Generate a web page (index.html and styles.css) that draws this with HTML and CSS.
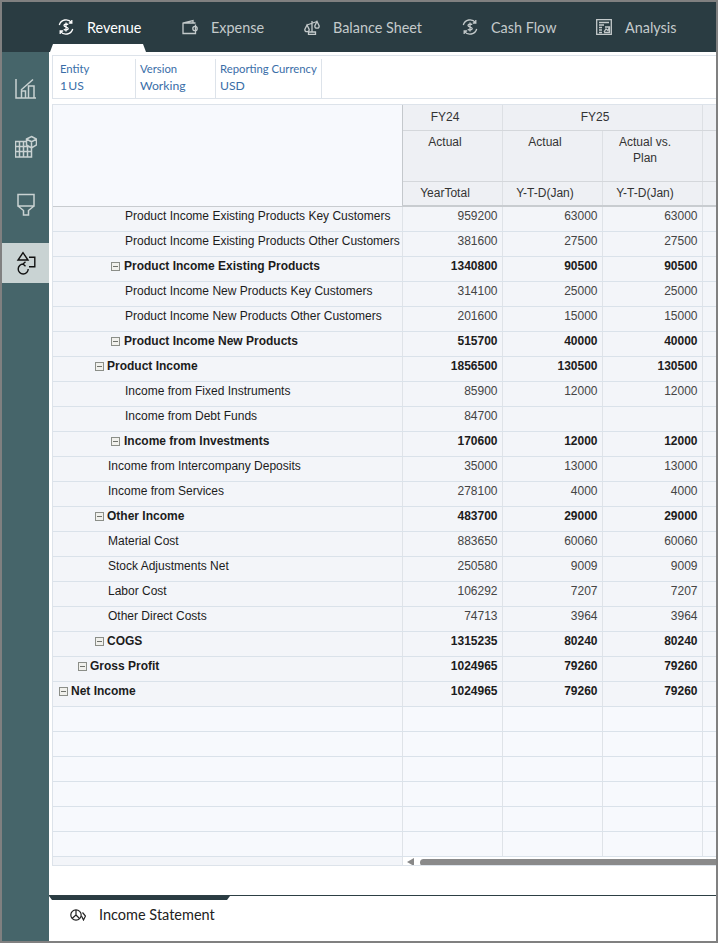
FILE: index.html
```html
<!DOCTYPE html>
<html lang="en">
<head>
<meta charset="utf-8">
<title>Income Statement</title>
<link rel="stylesheet" href="styles.css">
</head>
<body>
<div class="app">
  <header class="topbar">
    <div class="tab tab-active">
      <svg class="tab-icon" viewBox="0 0 16 16"><path d="M13.600 3.600A7 7 0 0 0 1.300 6M2.400 12.400A7 7 0 0 0 14.700 10M13.800 1v3h-3M2.200 15v-3h3"/><path d="M10.200 5.600C9.400 4.800 6 4.600 6 6.400c0 2 4.200 1.200 4.200 3.200 0 1.800-3.400 1.600-4.400 .7M8 3.500v9"/></svg>
      <span>Revenue</span>
    </div>
    <div class="tab tab-expense">
      <svg class="tab-icon" viewBox="0 0 16 16"><path d="M13.500 5.500V14.500H1V4L11 1.500V4M1 4H13.500"/><circle cx="13" cy="9.500" r="2.200"/></svg>
      <span>Expense</span>
    </div>
    <div class="tab tab-balance">
      <svg class="tab-icon" viewBox="0 0 16 16"><path d="M8 2V13M3 6L13 2.500M4.500 15.500H11.500V13H4.500Z"/><path d="M3 6L.8 10.500A2.200 2.200 0 0 0 5.200 10.500ZM13 2.500L10.800 7A2.200 2.200 0 0 0 15.200 7Z"/></svg>
      <span>Balance Sheet</span>
    </div>
    <div class="tab tab-cash">
      <svg class="tab-icon" viewBox="0 0 16 16"><path d="M13.600 3.600A7 7 0 0 0 1.300 6M2.400 12.400A7 7 0 0 0 14.700 10M13.800 1v3h-3M2.200 15v-3h3"/><path d="M10.200 5.600C9.400 4.800 6 4.600 6 6.400c0 2 4.200 1.200 4.200 3.200 0 1.800-3.400 1.600-4.400 .7M8 3.500v9"/></svg>
      <span>Cash Flow</span>
    </div>
    <div class="tab tab-analysis">
      <svg class="tab-icon" viewBox="0 0 16 16"><path d="M.7 .7H15.300V15.300H.7ZM3 3.500H13M3 6H8M3 8.500H6M3 11H6M3 13.500H6"/><path d="M8 13L10 10L12 11.500L13.500 8M9 8H13.500V13.500H8"/></svg>
      <span>Analysis</span>
    </div>
  </header>
  <div class="body-row">
    <nav class="sidebar">
      <div class="side-item">
        <svg viewBox="0 0 22 24"><path d="M1 3V22H21M6 14L18 3.500M6.500 21.500V15H10.500V21.500M13.500 21.500V10H19V21.500"/></svg>
      </div>
      <div class="side-item">
        <svg viewBox="0 0 22 24"><path d="M.5 7.500H16.500V23H.5ZM.5 12.500H16.500M.5 17.500H16.500M4.500 7.500V23M8.500 7.500V23M12.500 7.500V23"/><path class="fill-side" d="M16.500 2.500L21.500 5V11L16.500 14L11.500 11V5ZM11.500 5L16.500 8L21.500 5M16.500 8V14"/></svg>
      </div>
      <div class="side-item">
        <svg viewBox="0 0 22 24"><path d="M3 2.500H19V14H3ZM3 14L8.500 18.500V23H13.500V18.500L19 14"/></svg>
      </div>
      <div class="side-item side-active">
        <svg viewBox="0 0 22 24"><path d="M8 1.700L3 9H13ZM14 6.300H19.800V15.700H14"/><path d="M13.200 18A5 5 0 1 1 8.200 13M10.500 10.800L8 13L10.500 15.200"/></svg>
      </div>
    </nav>
    <main class="content">
      <section class="pov">
        <div class="pov-item pov-entity"><span class="pov-label">Entity</span><span>1 US</span></div>
        <div class="pov-item pov-version"><span class="pov-label">Version</span><span>Working</span></div>
        <div class="pov-item pov-currency"><span class="pov-label">Reporting Currency</span><span>USD</span></div>
      </section>
      <section class="grid-wrap">
        <table class="grid">
          <colgroup><col class="c-label"><col class="c-num"><col class="c-num"><col class="c-num"><col class="c-rest"></colgroup>
          <thead>
            <tr class="h-fy"><th class="corner" rowspan="3"></th><th>FY24</th><th colspan="2">FY25</th><th></th></tr>
            <tr class="h-scn"><th>Actual</th><th>Actual</th><th>Actual vs.<br>Plan</th><th></th></tr>
            <tr class="h-per"><th>YearTotal</th><th>Y-T-D(Jan)</th><th>Y-T-D(Jan)</th><th></th></tr>
          </thead>
          <tbody>
            <tr><td class="l3">Product Income Existing Products Key Customers</td><td>959200</td><td>63000</td><td>63000</td><td></td></tr>
            <tr><td class="l3">Product Income Existing Products Other Customers</td><td>381600</td><td>27500</td><td>27500</td><td></td></tr>
            <tr class="bold"><td class="p3"><i class="box"></i>Product Income Existing Products</td><td>1340800</td><td>90500</td><td>90500</td><td></td></tr>
            <tr><td class="l3">Product Income New Products Key Customers</td><td>314100</td><td>25000</td><td>25000</td><td></td></tr>
            <tr><td class="l3">Product Income New Products Other Customers</td><td>201600</td><td>15000</td><td>15000</td><td></td></tr>
            <tr class="bold"><td class="p3"><i class="box"></i>Product Income New Products</td><td>515700</td><td>40000</td><td>40000</td><td></td></tr>
            <tr class="bold"><td class="p2"><i class="box"></i>Product Income</td><td>1856500</td><td>130500</td><td>130500</td><td></td></tr>
            <tr><td class="l3">Income from Fixed Instruments</td><td>85900</td><td>12000</td><td>12000</td><td></td></tr>
            <tr><td class="l3">Income from Debt Funds</td><td>84700</td><td></td><td></td><td></td></tr>
            <tr class="bold"><td class="p3"><i class="box"></i>Income from Investments</td><td>170600</td><td>12000</td><td>12000</td><td></td></tr>
            <tr><td class="l2">Income from Intercompany Deposits</td><td>35000</td><td>13000</td><td>13000</td><td></td></tr>
            <tr><td class="l2">Income from Services</td><td>278100</td><td>4000</td><td>4000</td><td></td></tr>
            <tr class="bold"><td class="p2"><i class="box"></i>Other Income</td><td>483700</td><td>29000</td><td>29000</td><td></td></tr>
            <tr><td class="l2">Material Cost</td><td>883650</td><td>60060</td><td>60060</td><td></td></tr>
            <tr><td class="l2">Stock Adjustments Net</td><td>250580</td><td>9009</td><td>9009</td><td></td></tr>
            <tr><td class="l2">Labor Cost</td><td>106292</td><td>7207</td><td>7207</td><td></td></tr>
            <tr><td class="l2">Other Direct Costs</td><td>74713</td><td>3964</td><td>3964</td><td></td></tr>
            <tr class="bold"><td class="p2"><i class="box"></i>COGS</td><td>1315235</td><td>80240</td><td>80240</td><td></td></tr>
            <tr class="bold"><td class="p1"><i class="box"></i>Gross Profit</td><td>1024965</td><td>79260</td><td>79260</td><td></td></tr>
            <tr class="bold"><td class="p0"><i class="box"></i>Net Income</td><td>1024965</td><td>79260</td><td>79260</td><td></td></tr>
            <tr class="empty"><td></td><td></td><td></td><td></td><td></td></tr>
            <tr class="empty"><td></td><td></td><td></td><td></td><td></td></tr>
            <tr class="empty"><td></td><td></td><td></td><td></td><td></td></tr>
            <tr class="empty"><td></td><td></td><td></td><td></td><td></td></tr>
            <tr class="empty"><td></td><td></td><td></td><td></td><td></td></tr>
            <tr class="empty"><td></td><td></td><td></td><td></td><td></td></tr>
            <tr class="scroll-row">
              <td></td>
              <td colspan="4" class="scroll-cell"><div class="scroll-track"><i class="arrow"></i><i class="thumb"></i></div></td>
            </tr>
          </tbody>
        </table>
      </section>
      <footer class="bottom">
        <div class="bottom-tab">
          <svg class="bottom-icon" viewBox="0 0 16 12"><circle cx="6" cy="6" r="5.200"/><path d="M6 1V6L2 9.500M6 6L9.500 9.500M12.500 3.500L15.500 7L13.500 11L11.500 7"/></svg>
          <span>Income Statement</span>
        </div>
      </footer>
    </main>
  </div>
</div>
</body>
</html>
```
FILE: styles.css
```css
* { box-sizing: border-box; }
html, body { margin: 0; padding: 0; }
body { width: 718px; height: 943px; overflow: hidden; font-family: "Liberation Sans", Arial, sans-serif; }

.app { width: 718px; height: 943px; border: 2px solid #808080; display: flex; flex-direction: column; background: #fff; overflow: hidden; }

/* top navigation */
.topbar { height: 50px; flex: none; background: #2a3c42; display: flex; padding-left: 56px; color: #c4cacb; font: 14.4px Lato, "Open Sans", sans-serif; position: relative; }
.tab { display: flex; align-items: center; height: 50px; gap: 13px; position: relative; }
.tab-icon { width: 16px; height: 16px; fill: none; stroke: #c4cacb; stroke-width: 1.300; flex: none; }
.tab-active { color: #fff; width: 124px; }
.tab-active .tab-icon { stroke: #fff; }
.tab-active::after { content: ""; position: absolute; left: -8px; top: 42px; width: 96px; height: 8px; background: #fff; clip-path: polygon(3px 0, 93px 0, 96px 100%, 0 100%); }
.tab-expense { width: 122px; }
.tab-balance { width: 158px; }
.tab-cash { width: 134px; }

/* side rail */
.body-row { flex: 1; display: flex; min-height: 0; }
.sidebar { width: 47px; flex: none; background: #46656a; padding-top: 7px; display: flex; flex-direction: column; }
.side-item { height: 58px; display: flex; align-items: center; justify-content: center; }
.side-item svg { width: 22px; height: 24px; fill: none; stroke: #c9d2d2; stroke-width: 1.500; }
.side-active { background: #c9d3d3; height: 40px; margin-top: 10px; }
.side-active svg { stroke: #111; stroke-width: 1.400; }
.fill-side { fill: #46656a; }

/* content */
.content { flex: 1; min-width: 0; display: flex; flex-direction: column; }
.pov { margin: 3px 0 0 3px; height: 44px; flex: none; display: flex; border: solid #dde3ea; border-width: 1px 0 1px 0; border-left: 1px solid #dde3ea; padding: 3px 0 0; background: #fff; font: 12.200px Lato, "Open Sans", sans-serif; color: #3a6ea8; }
.pov-item { display: flex; flex-direction: column; padding-top: 2px; line-height: 16.500px; border-right: 1px solid #dde3ea; }
.pov-label { font-size: 11.300px; }
.pov-entity { width: 83px; padding-left: 7px; word-spacing: -2px; }
.pov-version { width: 80px; padding-left: 4px; }
.pov-currency { width: 106px; padding-left: 4px; white-space: nowrap; }

/* grid */
.grid-wrap { margin: 5px 0 0 3px; flex: none; height: 762px; overflow: hidden; border-top: 1px solid #dde3ea; border-bottom: 1px solid #dde3ea; border-left: 1px solid #dde3ea; }
.grid { table-layout: fixed; width: 663px; border-collapse: collapse; font-size: 12px; color: #222; }
.c-label { width: 349px; }
.c-num { width: 100px; }
.c-rest { width: 14px; }
.grid th { background: #eef0f4; font-weight: 400; color: #333; vertical-align: middle; border-right: 1px solid #dde0e4; border-bottom: 1px solid #d4d7db; padding: 0 14px 0 0; }
.grid .corner { background: #f7f9fd; border-right: 1px solid #c4c8cc; border-bottom: 1px solid #c8ccd0; padding: 0; }
.h-fy th { height: 25px; }
.h-scn th { height: 51px; vertical-align: top; padding-top: 3px; line-height: 16px; }
.h-per th { height: 25px; border-bottom: 2px solid #c8ccd0; }

.grid td { height: 25px; padding: 0 4px 6px 0; text-align: right; background: #f3f5f9; border-bottom: 1px solid #dae2ea; border-right: 1px solid #dfe3e8; color: #444; white-space: nowrap; overflow: hidden; }
.grid td:first-child { text-align: left; color: #1c1c1c; }
.grid .bold td { font-weight: 700; color: #1c1c1c; }
.grid .l3 { padding-left: 72px; }
.grid .l2 { padding-left: 55px; }
.grid .p3 { padding-left: 58px; }
.grid .p2 { padding-left: 42px; }
.grid .p1 { padding-left: 25px; }
.grid .p0 { padding-left: 6px; }
.box { display: inline-block; width: 9px; height: 9px; border: 1px solid #8b8e88; background: linear-gradient(#6f726c, #6f726c) center / 5px 1px no-repeat #f0f0ec; margin-right: 4px; vertical-align: -1px; }
.p2 .box, .p1 .box, .p0 .box { margin-right: 3px; }
.grid .empty td { background: #f7f9fd; padding: 0; }
.grid .scroll-row td { height: 9px; padding: 0; border-bottom: 0; }
.grid .scroll-cell { background: #fff; border-right: 0; }
.scroll-track { height: 9px; display: flex; align-items: flex-end; padding-left: 4px; gap: 6px; }
.arrow { width: 0; height: 0; border: solid transparent; border-width: 4px 7px 4px 0; border-right-color: #888; flex: none; }
.thumb { flex: 1; height: 7px; border-radius: 4px 0 0 4px; background: #8a8a8a; }

/* bottom tabs */
.bottom { margin-top: 29px; border-top: 1px solid #2d3f44; flex: 1; position: relative; }
.bottom::before { content: ""; position: absolute; left: 0; top: 0; width: 181px; height: 4px; background: #2a3c42; clip-path: polygon(0 0, 100% 0, 178px 100%, 3px 100%); }
.bottom-tab { display: flex; align-items: center; gap: 13px; padding: 10px 0 0 21px; font: 14.500px Lato, "Open Sans", sans-serif; color: #222; }
.bottom-icon { width: 16px; height: 12px; fill: none; stroke: #222; stroke-width: 1.200; }
```
